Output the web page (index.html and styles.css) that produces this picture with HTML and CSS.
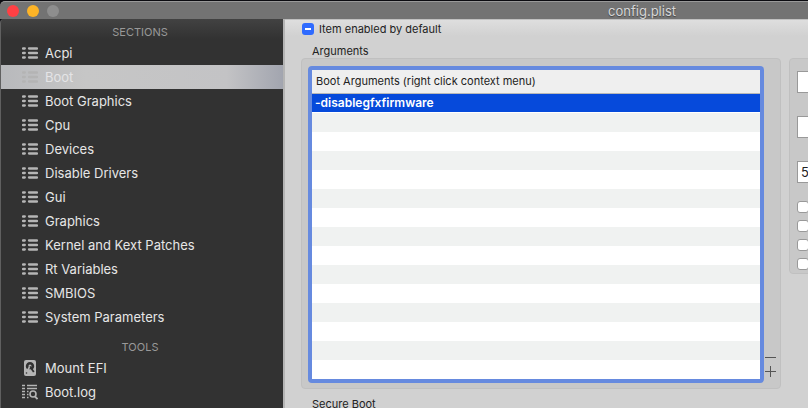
FILE: index.html
```
<!DOCTYPE html>
<html lang="en">
<head>
    <meta charset="UTF-8">
    <meta name="viewport" content="width=device-width, initial-scale=1.0">
    <title>config.plist</title>
    <link rel="stylesheet" href="styles.css">
</head>
<body>
    <svg width="0" height="0" class="defs">
        <symbol id="list" viewBox="0 0 16 12">
            <path d="M1 1.500h1.800M1 6h1.800M1 10.500h1.800M7 1.500h8M7 6h8M7 10.500h8" fill="none" stroke="currentColor" stroke-width="2.300" stroke-linecap="round"/>
        </symbol>
        <symbol id="disk" viewBox="0 0 16 16">
            <rect x="2" y="0" width="12" height="16" rx="2" fill="currentColor"/>
            <path d="M5.200 9.300a4.200 4.200 0 1 1 5.600 0" fill="#323232"/>
            <circle cx="8" cy="6" r="1.500" fill="currentColor"/>
            <path d="M8 6.500l3.800 5.500" stroke="#323232" stroke-width="1.800"/>
            <path d="M7.500 7l-2 3.500" stroke="currentColor" stroke-width="1.600"/>
            <circle cx="4.500" cy="13" r=".8" fill="#323232"/>
        </symbol>
        <symbol id="log" viewBox="0 0 16 16">
            <path d="M0 1.500h3M0 4.500h3M0 7.500h3M0 10.500h3M0 13.500h3M5 1.500h10M5 4.500h10" stroke="currentColor" stroke-width="1.700"/>
            <path d="M5 7.500h1.500M5 10.500h1.500M5 13.500h1.500" stroke="currentColor" stroke-width="1.700"/>
            <circle cx="11" cy="10" r="3" fill="none" stroke="currentColor" stroke-width="1.600"/>
            <path d="M13 12.500l2.500 2.500" stroke="currentColor" stroke-width="1.800"/>
        </symbol>
    </svg>

    <div class="window">
        <header class="titlebar">
            <button class="light close" aria-label="Close"></button>
            <button class="light minimize" aria-label="Minimize"></button>
            <button class="light zoom" aria-label="Zoom"></button>
            <h1 class="title">config.plist</h1>
        </header>

        <div class="content">
            <nav class="sidebar">
                <h2 class="heading">SECTIONS</h2>
                <a class="item" href="#acpi"><svg class="icon-list"><use href="#list"/></svg>Acpi</a>
                <a class="item selected" href="#boot"><svg class="icon-list"><use href="#list"/></svg>Boot</a>
                <a class="item" href="#boot-graphics"><svg class="icon-list"><use href="#list"/></svg>Boot Graphics</a>
                <a class="item" href="#cpu"><svg class="icon-list"><use href="#list"/></svg>Cpu</a>
                <a class="item" href="#devices"><svg class="icon-list"><use href="#list"/></svg>Devices</a>
                <a class="item" href="#drivers"><svg class="icon-list"><use href="#list"/></svg>Disable Drivers</a>
                <a class="item" href="#gui"><svg class="icon-list"><use href="#list"/></svg>Gui</a>
                <a class="item" href="#graphics"><svg class="icon-list"><use href="#list"/></svg>Graphics</a>
                <a class="item" href="#kernel"><svg class="icon-list"><use href="#list"/></svg>Kernel and Kext Patches</a>
                <a class="item" href="#rt"><svg class="icon-list"><use href="#list"/></svg>Rt Variables</a>
                <a class="item" href="#smbios"><svg class="icon-list"><use href="#list"/></svg>SMBIOS</a>
                <a class="item" href="#system"><svg class="icon-list"><use href="#list"/></svg>System Parameters</a>
                <h2 class="heading tools">TOOLS</h2>
                <a class="item" href="#mount"><svg class="icon-tool"><use href="#disk"/></svg>Mount EFI</a>
                <a class="item" href="#log-file"><svg class="icon-tool"><use href="#log"/></svg>Boot.log</a>
            </nav>

            <main class="panel">
                <div class="legend">
                    <input type="checkbox" class="mixed" id="enabled" checked>
                    <label for="enabled">Item enabled by default</label>
                </div>
                <h3 class="group-title">Arguments</h3>

                <div class="groups">
                    <section class="group arguments">
                        <div class="frame">
                            <table class="args">
                                <thead>
                                    <tr><th>Boot Arguments (right click context menu)</th></tr>
                                </thead>
                                <tbody>
                                    <tr class="active"><td>-disablegfxfirmware</td></tr>
                                    <tr><td></td></tr>
                                    <tr><td></td></tr>
                                    <tr><td></td></tr>
                                    <tr><td></td></tr>
                                    <tr><td></td></tr>
                                    <tr><td></td></tr>
                                    <tr><td></td></tr>
                                    <tr><td></td></tr>
                                    <tr><td></td></tr>
                                    <tr><td></td></tr>
                                    <tr><td></td></tr>
                                    <tr><td></td></tr>
                                    <tr><td></td></tr>
                                    <tr><td></td></tr>
                                </tbody>
                            </table>
                        </div>
                        <div class="controls">
                            <button aria-label="Remove argument"><svg width="12" height="12"><path d="M0 6.500h11" stroke="#555"/></svg></button>
                            <button aria-label="Add argument"><svg width="12" height="12"><path d="M0 6.500h11M5.500 1v11" stroke="#555"/></svg></button>
                        </div>
                    </section>

                    <!-- continues past the window edge -->
                    <div class="clip">
                        <section class="group options">
                            <input type="text" aria-label="Default volume">
                            <input type="text" aria-label="Default loader">
                            <input type="text" aria-label="Timeout" value="5">
                            <div class="checks">
                                <input type="checkbox" aria-label="Fast">
                                <input type="checkbox" aria-label="Debug">
                                <input type="checkbox" aria-label="Never hibernate">
                                <input type="checkbox" aria-label="Skip timeout">
                            </div>
                        </section>
                    </div>
                </div>

                <h3 class="group-title secure">Secure Boot</h3>
            </main>
        </div>
    </div>
</body>
</html>
```

FILE: styles.css
```
* {
    box-sizing: border-box;
}
body {
    margin: 0;
    height: 100vh;
    overflow: hidden;
    background-color: #0b0b10;
    font-family: Inter, "Liberation Sans", sans-serif;
    font-size: 11px;
    color: #222;
}
h1, h2, h3 {
    margin: 0;
    font-size: inherit;
    font-weight: 400;
}
button {
    padding: 0;
    border: none;
    background: none;
}
.defs {
    position: absolute;
}
.window {
    display: flex;
    flex-direction: column;
    height: 100vh;
    padding-top: 1px;
}

/* title bar */
.titlebar {
    display: flex;
    flex: none;
    align-items: center;
    gap: 8px;
    height: 18px;
    padding: 0 132px 0 7px;
    background-color: #737373;
    border-top: 1px solid #999;
    border-top-left-radius: 5px;
}
.light {
    width: 12px;
    height: 12px;
    border-radius: 50%;
}
.close {
    background-color: #ff4044;
}
.minimize {
    background-color: #fdb427;
}
.zoom {
    background-color: #8e8e8e;
}
.title {
    margin-left: auto;
    font-size: 13px;
    line-height: 16px;
    color: #d6d6d6;
    text-shadow: 0 1px 1px #444;
}
.content {
    display: flex;
    flex: 1;
    min-height: 0;
}

/* sidebar */
.sidebar {
    flex: none;
    width: 285px;
    overflow: hidden;
    background: linear-gradient(#424242, #323232 20px);
    border-left: 1px solid #606060;
    border-right: 2px solid #b4b4b4;
    border-top-left-radius: 4px;
}
.heading {
    height: 22px;
    padding: 5px 4px 0 0;
    line-height: 16px;
    text-align: center;
    color: #999;
}
.tools {
    height: 27px;
    padding-top: 10px;
}
.item {
    display: flex;
    align-items: center;
    gap: 7px;
    height: 24px;
    padding-left: 21px;
    font-size: 13px;
    color: #e6e6e6;
    text-decoration: none;
}
.icon-list {
    width: 16px;
    height: 12px;
    color: #b5b5b5;
}
.icon-tool {
    width: 16px;
    height: 16px;
    color: #b5b5b5;
}
.selected {
    background: linear-gradient(to right, #b8b9bc, #c6c6c6 30%, #c3c3c5 80%, #a2a5af);
    color: #e4e4e6;
}
.selected .icon-list {
    color: #b4b4b4;
}

/* main panel */
.panel {
    flex: 1;
    min-width: 0;
    overflow: hidden;
    padding-left: 16px;
    background: linear-gradient(#dedede, #d1d1d1 16px);
    border-top: 1px solid #c0c0c0;
}
.legend {
    display: flex;
    align-items: center;
    gap: 5px;
    height: 18px;
    padding-left: 1px;
}
input[type="checkbox"] {
    appearance: none;
    display: block;
    width: 12px;
    height: 12px;
    margin: 0;
    background-color: #fff;
    border: 1px solid #999;
    border-radius: 3px;
}
input.mixed {
    border: none;
    background: linear-gradient(#fff, #fff) center / 6px 2px no-repeat #2f6bff;
}
.group-title {
    height: 20px;
    padding: 5px 0 0 11px;
    line-height: 16px;
}
.groups {
    display: grid;
    grid-template-columns: minmax(0, 1fr) 19px;
    gap: 8px;
    align-items: start;
}
.group {
    background-color: #c8c8c8;
    border: 1px solid #c0c0c0;
    border-radius: 4px;
}
.arguments {
    display: flex;
    padding: 7px 3px 5px 6px;
}
.frame {
    flex: 1;
    border: 4px solid #668adf;
    border-radius: 4px;
    background-color: #fff;
}
.args {
    width: 100%;
    border-collapse: separate;
    border-spacing: 0;
}
.args th {
    height: 24px;
    padding: 0 4px 2px;
    background-color: #efefef;
    border-bottom: 1px solid #b8b8b8;
    font-weight: 400;
    text-align: left;
}
.args td {
    height: 19px;
    padding: 0 3px;
    border-bottom: 1px solid transparent;
    line-height: 18px;
}
.args tr:nth-child(even) td {
    background-color: #f0f2f1;
}
.args .active td {
    background-color: #064adb;
    background-clip: padding-box;
    color: #fff;
    font-size: 12px;
    font-weight: 600;
    line-height: 18px;
}
.controls {
    display: flex;
    flex-direction: column;
    justify-content: flex-end;
    gap: 2px;
    width: 12px;
    padding: 0 0 6px 1px;
    box-sizing: content-box;
}
.controls svg {
    display: block;
}
.clip {
    overflow: hidden;
}
.options {
    display: flex;
    flex-direction: column;
    width: 300px;
    height: 216px;
    padding: 12px 7px;
}
.options input[type="text"] {
    flex: none;
    width: 100%;
    height: 22px;
    margin-bottom: 23px;
    padding: 0 3px;
    background-color: #fff;
    border: 1px solid #999;
    font-family: inherit;
    font-size: 13px;
    color: #222;
}
.checks {
    display: flex;
    flex-direction: column;
    gap: 7px;
    margin-top: -5px;
}
.secure {
    padding-top: 7px;
}
```
